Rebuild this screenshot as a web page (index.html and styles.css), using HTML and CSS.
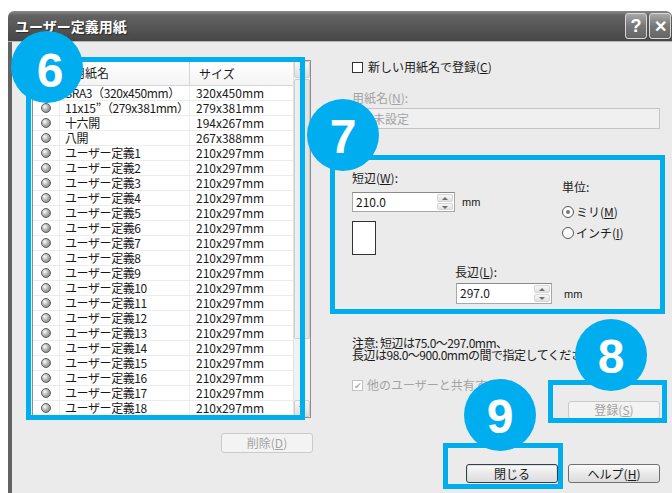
FILE: index.html
```html
<!DOCTYPE html>
<html lang="ja">
<head>
    <meta charset="UTF-8">
    <title>ユーザー定義用紙</title>
    <link rel="stylesheet" href="styles.css">
</head>
<body>
<div class="page">
    <div class="window">
        <div class="titlebar">
            <span class="title">ユーザー定義用紙</span>
            <div class="tb-btns">
                <span class="tb-btn">?</span>
                <span class="tb-btn tb-close">✕</span>
            </div>
        </div>
        <div class="client">
            <!-- Paper list -->
            <div class="left-col">
                <div class="list">
                    <div class="list-main">
                        <div class="list-head">
                            <span class="h-name">用紙名</span>
                            <span class="h-size">サイズ</span>
                        </div>
                        <div class="row"><span class="c-icon"><i class="dot"></i></span><span class="c-name">SRA3（320x450mm）</span><span class="c-size">320x450mm</span></div>
                        <div class="row"><span class="c-icon"><i class="dot"></i></span><span class="c-name">11x15”（279x381mm）</span><span class="c-size">279x381mm</span></div>
                        <div class="row"><span class="c-icon"><i class="dot"></i></span><span class="c-name">十六開</span><span class="c-size">194x267mm</span></div>
                        <div class="row"><span class="c-icon"><i class="dot"></i></span><span class="c-name">八開</span><span class="c-size">267x388mm</span></div>
                        <div class="row"><span class="c-icon"><i class="dot"></i></span><span class="c-name">ユーザー定義1</span><span class="c-size">210x297mm</span></div>
                        <div class="row"><span class="c-icon"><i class="dot"></i></span><span class="c-name">ユーザー定義2</span><span class="c-size">210x297mm</span></div>
                        <div class="row"><span class="c-icon"><i class="dot"></i></span><span class="c-name">ユーザー定義3</span><span class="c-size">210x297mm</span></div>
                        <div class="row"><span class="c-icon"><i class="dot"></i></span><span class="c-name">ユーザー定義4</span><span class="c-size">210x297mm</span></div>
                        <div class="row"><span class="c-icon"><i class="dot"></i></span><span class="c-name">ユーザー定義5</span><span class="c-size">210x297mm</span></div>
                        <div class="row"><span class="c-icon"><i class="dot"></i></span><span class="c-name">ユーザー定義6</span><span class="c-size">210x297mm</span></div>
                        <div class="row"><span class="c-icon"><i class="dot"></i></span><span class="c-name">ユーザー定義7</span><span class="c-size">210x297mm</span></div>
                        <div class="row"><span class="c-icon"><i class="dot"></i></span><span class="c-name">ユーザー定義8</span><span class="c-size">210x297mm</span></div>
                        <div class="row"><span class="c-icon"><i class="dot"></i></span><span class="c-name">ユーザー定義9</span><span class="c-size">210x297mm</span></div>
                        <div class="row"><span class="c-icon"><i class="dot"></i></span><span class="c-name">ユーザー定義10</span><span class="c-size">210x297mm</span></div>
                        <div class="row"><span class="c-icon"><i class="dot"></i></span><span class="c-name">ユーザー定義11</span><span class="c-size">210x297mm</span></div>
                        <div class="row"><span class="c-icon"><i class="dot"></i></span><span class="c-name">ユーザー定義12</span><span class="c-size">210x297mm</span></div>
                        <div class="row"><span class="c-icon"><i class="dot"></i></span><span class="c-name">ユーザー定義13</span><span class="c-size">210x297mm</span></div>
                        <div class="row"><span class="c-icon"><i class="dot"></i></span><span class="c-name">ユーザー定義14</span><span class="c-size">210x297mm</span></div>
                        <div class="row"><span class="c-icon"><i class="dot"></i></span><span class="c-name">ユーザー定義15</span><span class="c-size">210x297mm</span></div>
                        <div class="row"><span class="c-icon"><i class="dot"></i></span><span class="c-name">ユーザー定義16</span><span class="c-size">210x297mm</span></div>
                        <div class="row"><span class="c-icon"><i class="dot"></i></span><span class="c-name">ユーザー定義17</span><span class="c-size">210x297mm</span></div>
                        <div class="row"><span class="c-icon"><i class="dot"></i></span><span class="c-name">ユーザー定義18</span><span class="c-size">210x297mm</span></div>
                    </div>
                    <div class="scrollbar">
                        <span class="sb-btn sb-up"></span>
                        <span class="sb-thumb"></span>
                        <span class="sb-btn sb-down"></span>
                    </div>
                </div>
                <div class="btn-row">
                    <span class="btn btn-disabled btn-delete">削除(<u>D</u>)</span>
                </div>
            </div>

            <!-- Paper settings -->
            <div class="right-col">
                <label class="check-row"><span class="checkbox"></span>新しい用紙名で登録(<u>C</u>)</label>
                <div class="field-label disabled">用紙名(<u>N</u>):</div>
                <div class="text-input disabled">未設定</div>

                <div class="size-group">
                    <div class="size-top">
                        <div class="short-col">
                            <div class="field-label">短辺(<u>W</u>):</div>
                            <div class="spin-row">
                                <div class="spin spin-short"><span class="spin-val">210.0</span><span class="spin-btns"><i class="spin-up"></i><i class="spin-down"></i></span></div>
                                <span class="unit-text">mm</span>
                            </div>
                            <div class="paper-preview"></div>
                        </div>
                        <div class="unit-col">
                            <div class="field-label">単位:</div>
                            <label class="radio-row radio-first"><span class="radio checked"></span>ミリ(<u>M</u>)</label>
                            <label class="radio-row"><span class="radio"></span>インチ(<u>I</u>)</label>
                        </div>
                    </div>
                    <div class="long-row">
                        <div class="field-label">長辺(<u>L</u>):</div>
                        <div class="spin-row spin-row-long">
                            <div class="spin spin-long"><span class="spin-val">297.0</span><span class="spin-btns"><i class="spin-up"></i><i class="spin-down"></i></span></div>
                            <span class="unit-text">mm</span>
                        </div>
                    </div>
                </div>

                <div class="note">注意: 短辺は75.0～297.0mm、<br>長辺は98.0～900.0mmの間で指定してください。</div>
                <label class="check-row share-row disabled"><span class="checkbox checked-disabled">✔</span>他のユーザーと共有する(<u>A</u>)</label>

                <div class="btn-row btn-row-save">
                    <span class="btn btn-disabled">登録(<u>S</u>)</span>
                </div>
                <div class="btn-row btn-row-bottom">
                    <span class="btn btn-default">閉じる</span>
                    <span class="btn">ヘルプ(<u>H</u>)</span>
                </div>
            </div>
        </div>
    </div>

    <!-- Callout annotations -->
    <div class="anno-box box6"></div>
    <div class="anno-box box7"></div>
    <div class="anno-box box8"></div>
    <div class="anno-box box9"></div>
    <div class="anno-circle c6">6</div>
    <div class="anno-circle c7">7</div>
    <div class="anno-circle c8">8</div>
    <div class="anno-circle c9">9</div>
</div>
</body>
</html>
```

FILE: styles.css
```css
/* General */
body {
    margin: 0;
    background: #fff;
    font-family: "Noto Sans CJK JP", "Noto Sans", sans-serif;
    font-size: 12px;
    color: #1a1a1a;
}
.page {
    position: relative;
    width: 672px;
    height: 493px;
    overflow: hidden;
}
u {
    text-decoration: underline;
    text-underline-offset: 1px;
}

/* Window frame */
.window {
    margin: 11px 0 0 8px;
    height: 482px;
    display: flex;
    flex-direction: column;
    border-radius: 6px 6px 0 0;
    overflow: hidden;
}
.titlebar {
    height: 31px;
    flex: none;
    display: flex;
    align-items: center;
    padding-left: 7px;
    background: linear-gradient(#8a8a8a, #626262 15%, #545454 60%, #474747);
    border-bottom: 1px solid #b5b5b5;
    box-sizing: border-box;
}
.title {
    color: #fff;
    font-size: 14px;
    font-weight: bold;
    text-shadow: 1px 1px 1px #2a2a2a;
}
.tb-btns {
    margin-left: auto;
    display: flex;
    gap: 2px;
    padding-right: 1px;
}
.tb-btn {
    width: 20px;
    height: 24px;
    border: 1px solid #d8d8d8;
    border-radius: 3px;
    background: linear-gradient(#a8a8a8, #777 50%, #666);
    color: #fff;
    font: bold 18px "Liberation Sans", sans-serif;
    display: flex;
    align-items: center;
    justify-content: center;
}
.tb-close {
    font-size: 16px;
}
.client {
    flex: 1;
    display: flex;
    background: #ebebeb;
    border-left: 4px solid #626262;
    padding: 18px 0 0 20px;
}

/* List view */
.left-col {
    width: 281px;
}
.list {
    display: flex;
    width: 279px;
    height: 358px;
    box-sizing: border-box;
    border: 1px solid #8d8d8d;
    background: #fff;
}
.list-main {
    flex: 1;
    overflow: hidden;
}
.list-head {
    display: flex;
    height: 25px;
    box-sizing: border-box;
    align-items: center;
    border-bottom: 1px solid #d6d6d6;
    background: linear-gradient(#fff, #f4f4f4);
}
.h-name {
    width: 157px;
    box-sizing: border-box;
    padding-left: 40px;
    border-right: 1px solid #d6d6d6;
    line-height: 24px;
}
.h-size {
    padding-left: 9px;
}
.row {
    display: flex;
    height: 15px;
    box-sizing: border-box;
    border-bottom: 1px solid #ececec;
    line-height: 14px;
    white-space: nowrap;
}
.c-icon {
    width: 27px;
    flex: none;
    display: flex;
    align-items: center;
    border-right: 1px solid #ececec;
    box-sizing: border-box;
}
.dot {
    width: 8px;
    height: 8px;
    margin-left: 8px;
    border-radius: 50%;
    border: 1px solid #5b5b5b;
    background: radial-gradient(circle at 35% 35%, #fff, #b4b4b4 45%, #707070);
}
.c-name {
    width: 130px;
    flex: none;
    box-sizing: border-box;
    padding-left: 5px;
    border-right: 1px solid #ececec;
    letter-spacing: -0.4px;
}
.c-size {
    padding-left: 6px;
}
.scrollbar {
    width: 16px;
    flex: none;
    display: flex;
    flex-direction: column;
    background: #f2f2f2;
    border-left: 1px solid #e2e2e2;
}
.sb-btn {
    height: 15px;
    flex: none;
    border: 1px solid #cfcfcf;
    border-radius: 2px;
    background: linear-gradient(#f6f6f6, #dedede);
    position: relative;
}
.sb-up::after,
.sb-down::after {
    content: "";
    position: absolute;
    left: 4px;
    top: 5px;
    border-left: 3px solid transparent;
    border-right: 3px solid transparent;
}
.sb-up::after {
    border-bottom: 3px solid #666;
}
.sb-down::after {
    border-top: 3px solid #666;
}
.sb-thumb {
    margin: 1px 0 auto;
    height: 258px;
    border: 1px solid #cdcdcd;
    border-radius: 2px;
    background: linear-gradient(90deg, #f0f0f0, #e1e1e1);
}

/* Buttons */
.btn-row {
    display: flex;
    justify-content: flex-end;
    gap: 10px;
}
.left-col .btn-row {
    margin-top: 15px;
}
.btn {
    width: 92px;
    height: 19px;
    box-sizing: border-box;
    border: 1px solid #707070;
    border-radius: 3px;
    background: linear-gradient(#fbfbfb, #e9e9e9 50%, #dcdcdc);
    display: flex;
    align-items: center;
    justify-content: center;
    line-height: 14px;
}
.btn-default {
    border-color: #3c3c3c;
    box-shadow: inset 0 0 0 1px #cfe0ef;
}
.btn-disabled {
    color: #a3a3a3;
    border-color: #cacaca;
    background: #f3f3f3;
}
.btn-delete {
    height: 20px;
}

/* Right column */
.right-col {
    margin-left: 39px;
    width: 308px;
    display: flex;
    flex-direction: column;
}
.check-row {
    display: flex;
    align-items: center;
    height: 14px;
    line-height: 14px;
    white-space: nowrap;
}
.checkbox {
    width: 11px;
    height: 11px;
    box-sizing: border-box;
    border: 1px solid #333;
    background: #fff;
    margin-right: 5px;
    flex: none;
}
.checked-disabled {
    border-color: #c2c2c2;
    color: #b0b0b0;
    font-size: 9px;
    line-height: 9px;
    text-align: center;
    margin-right: 4px;
}
.disabled {
    color: #a3a3a3;
}
.field-label {
    height: 14px;
    line-height: 14px;
}
.right-col > .field-label {
    margin-top: 17px;
}
.text-input {
    margin-top: 3px;
    height: 21px;
    box-sizing: border-box;
    border: 1px solid #c4c4c4;
    background: #f0f0f0;
    padding-left: 20px;
    line-height: 19px;
}

/* Size group */
.size-group {
    margin-top: 42px;
}
.size-top {
    display: flex;
}
.short-col {
    width: 210px;
}
.spin-row {
    display: flex;
    align-items: center;
    margin-top: 7px;
}
.spin {
    display: flex;
    height: 20px;
    box-sizing: border-box;
    border: 1px solid #a8a8a8;
    border-top-color: #8a8a8a;
    background: #fff;
    padding: 1px;
}
.spin-short {
    width: 103px;
}
.spin-long {
    width: 96px;
    height: 21px;
}
.spin-val {
    flex: 1;
    padding-left: 2px;
    line-height: 16px;
}
.spin-btns {
    width: 16px;
    display: flex;
    flex-direction: column;
    gap: 1px;
}
.spin-btns i {
    flex: 1;
    position: relative;
    border: 1px solid #d6d6d6;
    border-radius: 2px;
    background: linear-gradient(#f7f7f7, #e1e1e1);
}
.spin-btns i::after {
    content: "";
    position: absolute;
    left: 4px;
    top: 2px;
    border-left: 3px solid transparent;
    border-right: 3px solid transparent;
}
.spin-up::after {
    border-bottom: 3px solid #6f6f6f;
}
.spin-down::after {
    border-top: 3px solid #6f6f6f;
}
.unit-text {
    margin-left: 7px;
    font-family: "Liberation Sans", sans-serif;
    font-size: 11px;
}
.spin-row-long {
    margin-top: 4px;
    margin-left: 1px;
}
.spin-row-long .unit-text {
    margin-left: 12px;
}
.paper-preview {
    margin-top: 9px;
    width: 24px;
    height: 34px;
    box-sizing: border-box;
    border: 1px solid #333;
    background: #fff;
}
.unit-col {
    padding-top: 9px;
}
.radio-row {
    display: flex;
    align-items: center;
    height: 14px;
    margin-top: 7px;
    line-height: 14px;
}
.radio-first {
    margin-top: 11px;
}
.radio {
    width: 12px;
    height: 12px;
    box-sizing: border-box;
    border: 1px solid #555;
    border-radius: 50%;
    background: #fff;
    margin-right: 2px;
    position: relative;
}
.checked::after {
    content: "";
    position: absolute;
    left: 3px;
    top: 3px;
    width: 4px;
    height: 4px;
    border-radius: 50%;
    background: #777;
}
.long-row {
    padding-left: 103px;
}
.long-row .field-label {
    margin-top: 10px;
}

/* Notes and actions */
.note {
    margin-top: 33px;
    line-height: 12px;
    white-space: nowrap;
    letter-spacing: -0.5px;
}
.share-row {
    margin-top: 17px;
}
.btn-row-save {
    margin-top: 9px;
}
.btn-row-save .btn {
    height: 18px;
}
.btn-row-bottom {
    margin-top: 45px;
}

/* Callouts */
.anno-box {
    position: absolute;
    border: 5px solid #00aeef;
    box-sizing: border-box;
}
.box6 { left: 26px; top: 57px; width: 279px; height: 363px; }
.box7 { left: 330px; top: 155px; width: 335px; height: 159px; }
.box8 { left: 548px; top: 380px; width: 119px; height: 43px; }
.box9 { left: 443px; top: 443px; width: 120px; height: 46px; }
.anno-circle {
    position: absolute;
    width: 72px;
    height: 72px;
    border-radius: 50%;
    background: #00aeef;
    color: #fff;
    font: bold 48px "Liberation Sans", sans-serif;
    display: flex;
    align-items: center;
    justify-content: center;
    padding-top: 2px;
    box-sizing: border-box;
}
.c6 { left: 11px; top: 31px; padding: 6px 0 0 6px; }
.c7 { left: 307px; top: 99px; }
.c8 { left: 575px; top: 319px; }
.c9 { left: 464px; top: 379px; }
```
